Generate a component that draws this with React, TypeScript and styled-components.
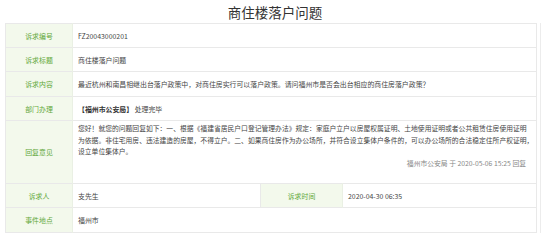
import React from "react";
import styled, { createGlobalStyle } from "styled-components";

const Global = createGlobalStyle`
  html, body { margin: 0; padding: 0; background: #fff; }
  body { font-family: "Noto Sans CJK SC", "Noto Sans", sans-serif; }
`;

const Page = styled.div`
  width: 550px;
  height: 241px;
  box-sizing: border-box;
  padding: 0 5px;
  overflow: hidden;
`;

const Title = styled.h1`
  margin: 0;
  height: 23px;
  line-height: 24px;
  text-align: center;
  font-size: 13.5px;
  font-weight: normal;
  color: #333;
  overflow: hidden;
`;

const Frame = styled.div`
  width: 535px;
  border-right: 1px solid #ececec;
`;

const Table = styled.table`
  width: 531px;
  border-collapse: collapse;
  table-layout: fixed;
  font-size: 6.9px;
  color: #444;
`;

const Row = styled.tr<{ $h?: number }>`
  height: ${(p) => p.$h ?? 24}px;
  border: 1px solid #e9e9e9;
`;

const Label = styled.th<{ $divider?: boolean }>`
  background: #f3f9ec;
  color: #62a83a;
  font-weight: normal;
  text-align: center;
  padding: 0;
  border-right: 1px solid #eaf0e4;
  ${(p) => (p.$divider ? "border-left: 1px solid #e9e9e9;" : "")}
`;

const Value = styled.td`
  padding: 0 5px;
  text-align: left;
  vertical-align: middle;
  line-height: 10px;
`;

const Reply = styled.td`
  padding: 2px 1px 10px 5px;
  font-size: 6.8px;
  line-height: 11.5px;
  vertical-align: top;
  white-space: normal;
`;

const ReplyFoot = styled.div`
  text-align: right;
  color: #888;
  padding-right: 9px;
`;

const Dept = styled.b`
  font-weight: bold;
  color: #333;
`;

export default function App() {
  return (
    <Page>
      <Global />
      <Title>商住楼落户问题</Title>
      <Frame>
        <Table>
          <colgroup>
            <col style={{ width: 67 }} />
            <col style={{ width: 188 }} />
            <col style={{ width: 82 }} />
            <col style={{ width: 194 }} />
          </colgroup>
          <tbody>
            <Row>
              <Label>诉求编号</Label>
              <Value colSpan={3}>FZ20043000201</Value>
            </Row>
            <Row>
              <Label>诉求标题</Label>
              <Value colSpan={3}>商住楼落户问题</Value>
            </Row>
            <Row $h={25}>
              <Label>诉求内容</Label>
              <Value colSpan={3}>
                最近杭州和南昌相继出台落户政策中，对商住房实行可以落户政策。请问福州市是否会出台相应的商住房落户政策？
              </Value>
            </Row>
            <Row>
              <Label>部门办理</Label>
              <Value colSpan={3}>
                <Dept>【福州市公安局】</Dept> 处理完毕
              </Value>
            </Row>
            <Row $h={63}>
              <Label>回复意见</Label>
              <Reply colSpan={3}>
                您好！就您的问题回复如下：一、根据《福建省居民户口登记管理办法》规定：家庭户立户以房屋权属证明、土地使用证明或者公共租赁住房使用证明
                <br />
                为依据。非住宅用房、违法建造的房屋，不得立户。二、如果商住房作为办公场所，并符合设立集体户条件的，可以办公场所的合法稳定住所产权证明，设立单位集体户。
                <ReplyFoot>福州市公安局 于 2020-05-06 15:25 回复</ReplyFoot>
              </Reply>
            </Row>
            <Row>
              <Label>诉求人</Label>
              <Value>支先生</Value>
              <Label $divider>诉求时间</Label>
              <Value>2020-04-30 06:35</Value>
            </Row>
            <Row $h={25}>
              <Label>事件地点</Label>
              <Value colSpan={3}>福州市</Value>
            </Row>
          </tbody>
        </Table>
      </Frame>
    </Page>
  );
}
